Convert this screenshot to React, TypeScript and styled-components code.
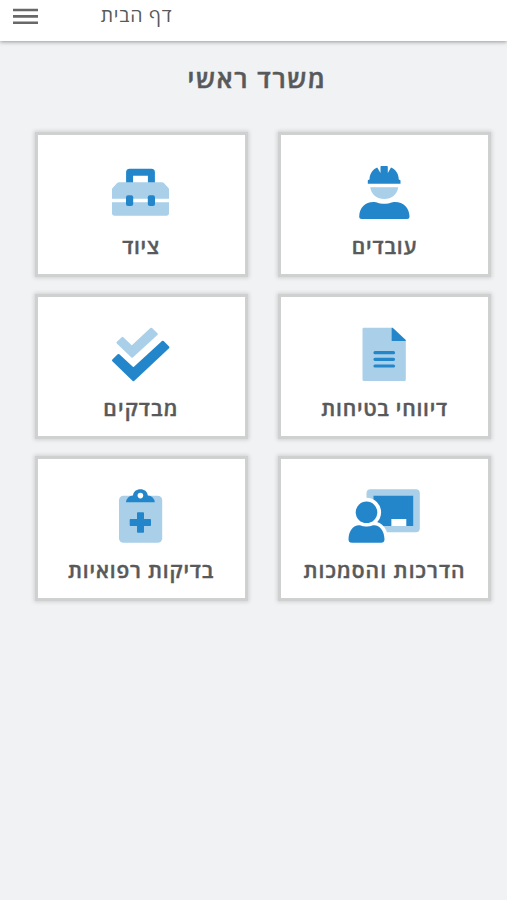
import React from "react";
import styled, { createGlobalStyle } from "styled-components";

const DARK = "#2386cb";
const LIGHT = "#a9cfe9";

const GlobalStyle = createGlobalStyle`
  * { box-sizing: border-box; }
  body {
    margin: 0;
    background: #f0f2f4;
    color: #58595b;
    font-family: "Open Sans", "Noto Sans", "DejaVu Sans", sans-serif;
  }
`;

const Page = styled.div`
  min-height: 900px;
  display: flex;
  flex-direction: column;
`;

const TopBar = styled.header`
  display: flex;
  align-items: flex-start;
  height: 41px;
  padding: 0 12px;
  background: #fff;
  box-shadow: 0 1px 4px rgba(0, 0, 0, 0.38);
`;

const MenuButton = styled.button`
  width: 27px;
  margin: 8px 61px 0 0;
  padding: 0 1px;
  border: 0;
  background: none;
`;

const MenuIcon = styled.svg`
  display: block;
  width: 25px;
  height: 17px;
`;

const PageName = styled.span`
  width: 73px;
  display: flex;
  justify-content: center;
  font-size: 19.5px;
  letter-spacing: 0.75px;
  line-height: 30px;
  white-space: nowrap;
`;

const Title = styled.h1`
  margin: 16px 0 0 7px;
  height: 43px;
  text-align: center;
  font-size: 25.5px;
  font-weight: 600;
  letter-spacing: 1.7px;
  line-height: 43px;
  -webkit-text-stroke: 0.5px currentColor;
`;

const Grid = styled.main`
  display: grid;
  grid-template-columns: 213px 213px;
  grid-auto-rows: 145px;
  gap: 17px 30.5px;
  padding: 32px 16px 0 0;
`;

const Card = styled.section`
  display: flex;
  flex-direction: column;
  align-items: center;
  padding-top: 26px;
  border: 3px solid #cfd1d1;
  background: #fff;
  box-shadow: 0 0 4px 1px rgba(0, 0, 0, 0.14);
`;

const Icon = styled.svg`
  flex: none;
  display: block;
  width: 80px;
  height: 64px;
`;

const Label = styled.h2<{ $tracking: number }>`
  margin: 5px 0 0;
  font-size: 21px;
  font-weight: 600;
  letter-spacing: ${(p) => p.$tracking}px;
  line-height: 32px;
  white-space: nowrap;
  -webkit-text-stroke: 0.4px currentColor;
`;

const Toolbox = () => (
  <Icon viewBox="0 0 80 64">
    <path d="M28.6 22V11.2H50.4V22" fill="none" stroke={DARK} strokeWidth="7" strokeLinejoin="round" />
    <path d="M18 21.3H61Q62 21.3 62.8 22.1L67.2 26.7Q68 27.5 68 28.5V37.7H11V28.5Q11 27.5 11.8 26.7L16.2 22.1Q17 21.3 18 21.3ZM11 41.3H68V52Q68 54.7 65.3 54.7H13.7Q11 54.7 11 52Z" fill={LIGHT} />
    <rect x="25" y="34.3" width="7.2" height="10.6" rx="2" fill={DARK} />
    <rect x="46.8" y="34.3" width="7.2" height="10.6" rx="2" fill={DARK} />
  </Icon>
);

const Worker = () => (
  <Icon viewBox="0 0 80 64">
    <path d="M22.8 22.7V19.5Q22.8 18.6 24.5 18.4C24.7 12 28.5 8 32.2 6.5L35.5 12V5.8Q35.5 5 36.3 5H42Q42.8 5 42.8 5.8V12L46 6.5C50.5 8.5 53.6 12.5 53.8 18.4Q55.5 18.6 55.5 19.5V22.7Z" fill={DARK} />
    <path d="M25.2 26.3H53.2C52 34 46.5 38 39.2 38S26.4 34 25.2 26.3Z" fill={LIGHT} />
    <path d="M14.2 55.5C14.5 46.5 20 41 28.5 41C32 41 33 42.7 39.2 42.7S46.5 41 50 41C58.5 41 64.2 46.5 64.5 55.5Q64.5 58 62 58H16.7Q14.2 58 14.2 55.5Z" fill={DARK} />
  </Icon>
);

const Checks = () => (
  <Icon viewBox="0 0 80 64" strokeWidth="2.4" strokeLinejoin="round">
    <path d="M16.7 19.7L21.5 15L30.9 24L50.2 5.9L55.6 11.1L31 33.5Z" fill={LIGHT} stroke={LIGHT} />
    <path d="M12.2 37.3L17.5 32.2L32.4 45.8L61.8 18.9L67.2 24.3L32.3 57Z" fill={DARK} stroke={DARK} />
  </Icon>
);

const Report = () => (
  <Icon viewBox="0 0 80 64">
    <path d="M18.8 4.7H46.5V18H60.8V56.5Q60.8 58 59.3 58H19Q17.5 58 17.5 56.5V6Q17.5 4.7 18.8 4.7Z" fill={LIGHT} />
    <path d="M46.5 4.7H47.7L60.8 17V18H46.5Z" fill={DARK} />
    <path d="M30 29.7H48.5M30 36.3H48.5M30 43H48.5" stroke={DARK} strokeWidth="3.2" strokeLinecap="round" />
  </Icon>
);

const Medical = () => (
  <Icon viewBox="0 0 80 64">
    <rect x="18" y="10.7" width="43.2" height="47" rx="4.5" fill={LIGHT} />
    <path d="M25 17.3Q25.8 11 32 10.5C32.5 6.5 35.5 4.3 39.4 4.3S46.3 6.5 46.8 10.5Q53 11 53.8 17.3Z" fill={DARK} />
    <circle cx="39.4" cy="10.6" r="2.8" fill="#fff" />
    <path d="M36.8 27.3H42.2Q43 27.3 43 28.1V34H49.2Q50 34 50 34.8V40.2Q50 41 49.2 41H43V46.9Q43 47.7 42.2 47.7H36.8Q36 47.7 36 46.9V41H29.5Q28.7 41 28.7 40.2V34.8Q28.7 34 29.5 34H36V28.1Q36 27.3 36.8 27.3Z" fill={DARK} />
  </Icon>
);

const Training = () => (
  <Icon viewBox="0 0 80 64">
    <rect x="21.5" y="4.3" width="53.3" height="43" rx="4" fill={LIGHT} />
    <path d="M28.5 10.7H68.2V41H61.2V34H46.5V41H28.5Z" fill={DARK} />
    <path d="M46.5 34H61.2V41H46.5Z" fill="#fff" />
    <circle cx="21.5" cy="27.3" r="14.6" fill="#fff" />
    <path d="M3.5 54.2C3.7 46 8 40.3 14 40.3C16.5 40.3 17.5 41.6 21.5 41.6S26.5 40.3 29 40.3C35 40.3 39.3 46 39.5 54.2Q39.5 57.7 36 57.7H7Q3.5 57.7 3.5 54.2Z" fill={DARK} stroke="#fff" strokeWidth="7" paintOrder="stroke" />
    <circle cx="21.5" cy="27.3" r="10.8" fill={DARK} />
  </Icon>
);

const cards = [
  { label: "עובדים", tracking: 0.9, Art: Worker },
  { label: "ציוד", tracking: 0.7, Art: Toolbox },
  { label: "דיווחי בטיחות", tracking: 0.75, Art: Report },
  { label: "מבדקים", tracking: 1.2, Art: Checks },
  { label: "הדרכות והסמכות", tracking: 1.05, Art: Training },
  { label: "בדיקות רפואיות", tracking: 0.85, Art: Medical },
];

export default function App() {
  return (
    <Page>
      <GlobalStyle />
      <TopBar>
        <MenuButton aria-label="תפריט">
          <MenuIcon viewBox="0 0 25 17">
            <path d="M0 2H25M0 8.4H25M0 14.8H25" stroke="#686868" strokeWidth="2.6" />
          </MenuIcon>
        </MenuButton>
        <PageName dir="rtl">דף הבית</PageName>
      </TopBar>
      <Title dir="rtl">משרד ראשי</Title>
      <Grid dir="rtl">
        {cards.map(({ label, tracking, Art }) => (
          <Card key={label}>
            <Art />
            <Label $tracking={tracking}>{label}</Label>
          </Card>
        ))}
      </Grid>
    </Page>
  );
}
